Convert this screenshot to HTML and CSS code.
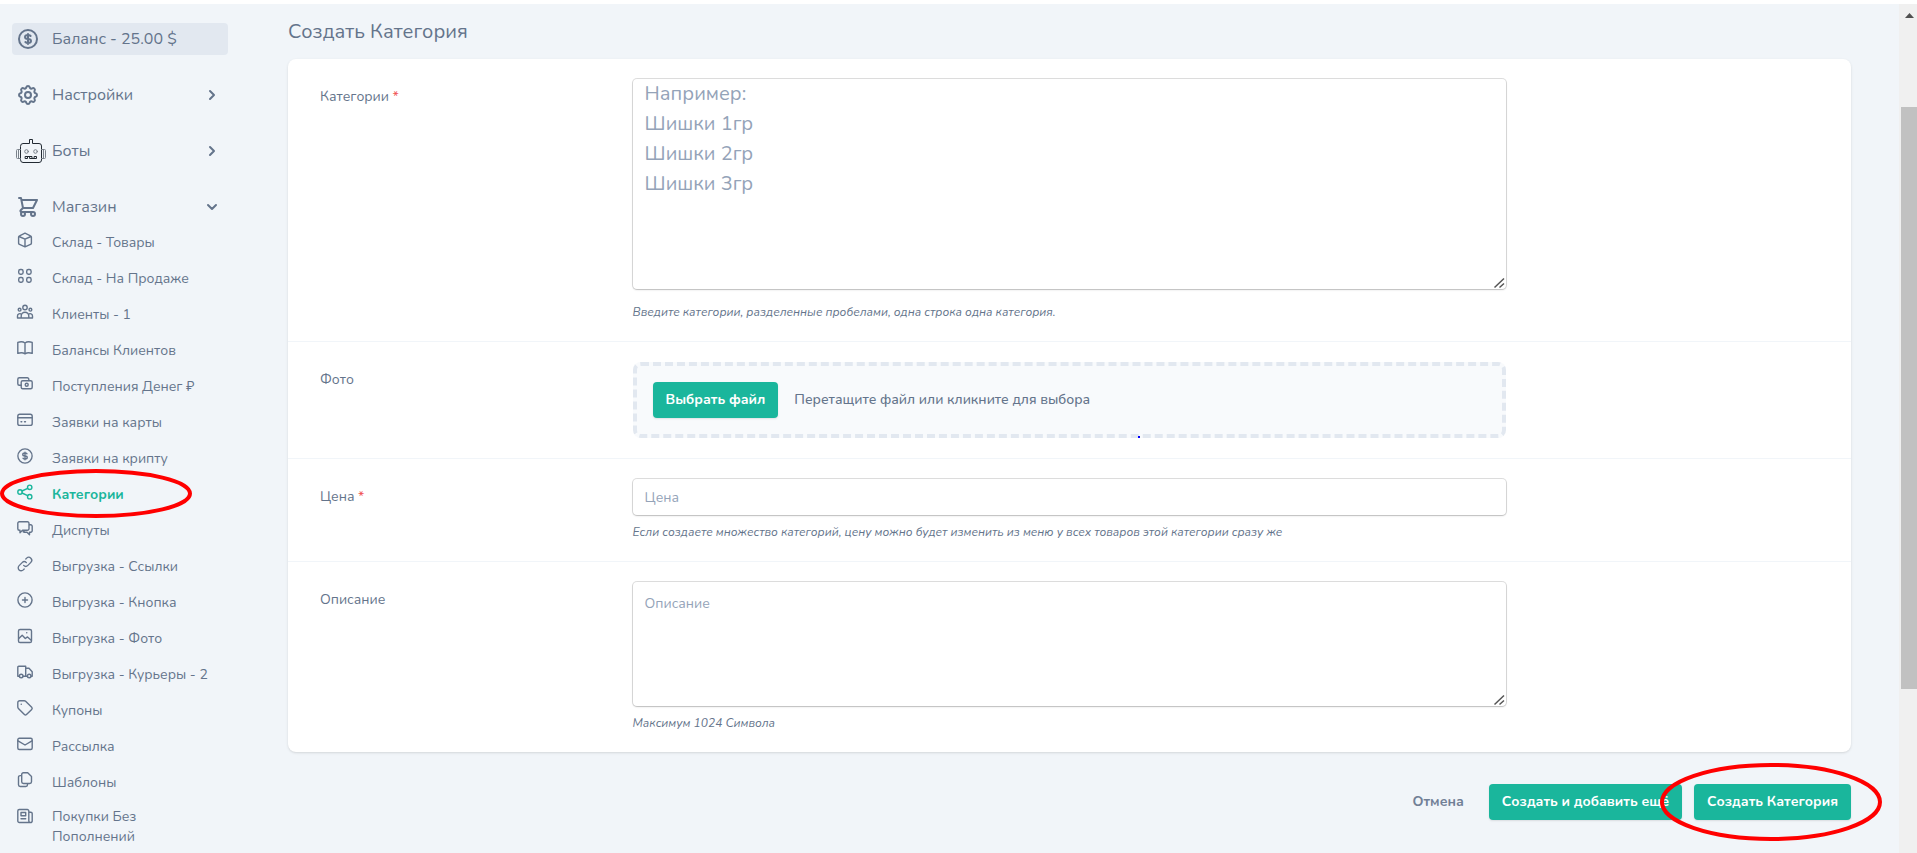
FILE: index.html
```html
<!DOCTYPE html>
<html lang="ru">
<head>
<meta charset="utf-8">
<meta name="viewport" content="width=device-width, initial-scale=1">
<title>Создать Категория</title>
<link rel="stylesheet" href="styles.css">
</head>
<body>
<div class="app">
  <nav class="sidebar" aria-label="Меню">
    <ul class="menu">
      <li><a class="menu-link is-balance" href="#">
        <span class="menu-icon"><svg class="icon" viewBox="0 0 24 24"><path d="M12 8c-1.657 0-3 .895-3 2s1.343 2 3 2 3 .895 3 2-1.343 2-3 2m0-8c1.11 0 2.080.402 2.599 1M12 8V7m0 1v8m0 0v1m0-1c-1.11 0-2.080-.402-2.599-1M21 12a9 9 0 11-18 0 9 9 0 0118 0z"/></svg></span>
        <span>Баланс - 25.00 $</span></a></li>
      <li><button class="menu-link" type="button">
        <span class="menu-icon"><svg class="icon" viewBox="0 0 24 24"><path d="M10.325 4.317c.426-1.756 2.924-1.756 3.350 0a1.724 1.724 0 002.573 1.066c1.543-.94 3.310.826 2.370 2.370a1.724 1.724 0 001.065 2.572c1.756.426 1.756 2.924 0 3.350a1.724 1.724 0 00-1.066 2.573c.94 1.543-.826 3.310-2.370 2.370a1.724 1.724 0 00-2.572 1.065c-.426 1.756-2.924 1.756-3.350 0a1.724 1.724 0 00-2.573-1.066c-1.543.94-3.310-.826-2.370-2.370a1.724 1.724 0 00-1.065-2.572c-1.756-.426-1.756-2.924 0-3.350a1.724 1.724 0 001.066-2.573c-.94-1.543.826-3.310 2.370-2.370.996.608 2.296.07 2.572-1.065z"/><path d="M15 12a3 3 0 11-6 0 3 3 0 016 0z"/></svg></span>
        <span>Настройки</span>
        <svg class="chevron" viewBox="0 0 12 12"><path d="M4 2l4 4-4 4"/></svg></button></li>
      <li><button class="menu-link" type="button">
        <span class="menu-icon"><svg class="robot" viewBox="0 0 30 24"><path d="M4.500 7a2.500 2.500 0 012.500-2.500h6.500v-4h3v4H23A2.500 2.500 0 0125.500 7v14a2.500 2.500 0 01-2.500 2.500H7A2.500 2.500 0 014.500 21z"/><path class="faint" d="M4.500 10.500h-3a1 1 0 00-1 1v7a1 1 0 001 1h3M2.500 11v8M25.500 10.500h3a1 1 0 011 1v7a1 1 0 01-1 1h-3M27.500 11v8"/><circle class="faint" cx="10.500" cy="12.500" r="1.800"/><circle class="faint" cx="19.500" cy="12.500" r="1.800"/><path d="M9.500 17.500h2v2h-2zM14 17.500h2v2h-2zM18.500 17.500h2v2h-2zM11.500 17.500H14M16 19.500h2.500"/></svg></span>
        <span>Боты</span>
        <svg class="chevron" viewBox="0 0 12 12"><path d="M4 2l4 4-4 4"/></svg></button></li>
      <li><button class="menu-link" type="button" aria-expanded="true">
        <span class="menu-icon"><svg class="icon" viewBox="0 0 24 24"><path d="M3 3h2l.4 2M7 13h10l4-8H5.400M7 13L5.400 5M7 13l-2.293 2.293c-.63.63-.184 1.707.707 1.707H17m0 0a2 2 0 100 4 2 2 0 000-4zm-8 2a2 2 0 11-4 0 2 2 0 014 0z"/></svg></span>
        <span>Магазин</span>
        <svg class="chevron" viewBox="0 0 12 12"><path d="M2 4l4 4 4-4"/></svg></button>
        <ul class="submenu">
          <li><a class="sub-link" href="#"><svg class="sub-icon" viewBox="0 0 18 18"><path d="M9 2.200L14.500 4.800a1.500 1.500 0 01.9 1.300v6a1.500 1.500 0 01-.9 1.300L9 15.800l-5.500-2.400a1.500 1.500 0 01-.9-1.300v-6a1.500 1.500 0 01.9-1.300zM3 5.500l6 2.700 6-2.700M9 8.200v7.400"/></svg><span>Склад - Товары</span></a></li>
          <li><a class="sub-link" href="#"><svg class="sub-icon" viewBox="0 0 18 18"><rect x="2.700" y="2.500" width="4.400" height="4.800" rx="1.700"/><rect x="10.700" y="2.500" width="4.400" height="4.800" rx="1.700"/><rect x="2.700" y="10.500" width="4.400" height="4.800" rx="1.700"/><rect x="10.700" y="10.500" width="4.400" height="4.800" rx="1.700"/></svg><span>Склад - На Продаже</span></a></li>
          <li><a class="sub-link" href="#"><svg class="sub-icon" viewBox="0 0 18 18"><circle cx="9" cy="4.500" r="2.200"/><circle cx="3.600" cy="6.700" r="1.400"/><circle cx="14.400" cy="6.700" r="1.400"/><path d="M5.200 15v-2a3.800 3.800 0 017.600 0v2zM5.200 15H1.500v-2a2.300 2.300 0 014-1.600M12.800 15h3.700v-2a2.300 2.300 0 00-4-1.600"/></svg><span>Клиенты - 1</span></a></li>
          <li><a class="sub-link" href="#"><svg class="sub-icon" viewBox="0 0 18 18"><path d="M9 4C7.500 2.800 4 2.600 1.800 3.400v11C4 13.600 7.500 13.800 9 14.800M9 4c1.500-1.200 5-1.400 7.200-.6v11c-2.200-.8-5.700-.6-7.200.4M9 4v10.800"/></svg><span>Балансы Клиентов</span></a></li>
          <li><a class="sub-link" href="#"><svg class="sub-icon" viewBox="0 0 18 18"><path d="M12.800 5.500V4.300a1.500 1.500 0 00-1.500-1.500h-8a1.500 1.500 0 00-1.500 1.500v4.500a1.500 1.500 0 001.500 1.500h2"/><rect x="5.200" y="5.700" width="11" height="8" rx="1.500"/><circle cx="10.700" cy="9.700" r="1.500"/></svg><span>Поступления Денег ₽</span></a></li>
          <li><a class="sub-link" href="#"><svg class="sub-icon" viewBox="0 0 18 18"><rect x="1.800" y="3.200" width="14.400" height="11.200" rx="2"/><path d="M2 6.800h14M5 10.700h.8M8.500 10.700h1"/></svg><span>Заявки на карты</span></a></li>
          <li><a class="sub-link" href="#"><svg class="sub-icon" viewBox="0 0 24 24"><path class="wide" d="M12 8c-1.657 0-3 .895-3 2s1.343 2 3 2 3 .895 3 2-1.343 2-3 2m0-8c1.110 0 2.080.402 2.599 1M12 8V7m0 1v8m0 0v1m0-1c-1.110 0-2.080-.402-2.599-1M21.500 12a9.500 9.500 0 11-19 0 9.500 9.500 0 0119 0z"/></svg><span>Заявки на крипту</span></a></li>
          <li class="marked"><a class="sub-link is-active" href="#" aria-current="page"><svg class="sub-icon" viewBox="0 0 18 18"><circle cx="4" cy="9" r="2.200"/><circle cx="13.700" cy="4.300" r="2.200"/><circle cx="13.700" cy="13.700" r="2.200"/><path d="M6 8l5.700-2.700M6 10l5.700 2.700"/></svg><span>Категории</span></a>
            <svg class="mark mark-menu" viewBox="0 0 192 49" aria-hidden="true"><ellipse cx="96" cy="24.500" rx="94" ry="22.500"/></svg></li>
          <li><a class="sub-link" href="#"><svg class="sub-icon" viewBox="0 0 18 18"><path d="M13 4.500v-.2a1.500 1.500 0 00-1.500-1.500H3.300a1.500 1.500 0 00-1.500 1.500v5.400a1.500 1.500 0 001.500 1.500H4v2.500l2.500-2.500h5A1.500 1.500 0 0013 9.700zM13 5.700h1.700a1.500 1.500 0 011.500 1.500v4.600a1.500 1.500 0 01-1.500 1.500H13.500v2.500L11 13.300H8.300a1.500 1.500 0 01-1.100-.5l1.600-1.600"/></svg><span>Диспуты</span></a></li>
          <li><a class="sub-link" href="#"><svg class="sub-icon" viewBox="0 0 24 24"><path class="wide" d="M13.828 10.172a4 4 0 00-5.656 0l-4 4a4 4 0 105.656 5.656l1.102-1.101m-.758-4.899a4 4 0 005.656 0l4-4a4 4 0 00-5.656-5.656l-1.100 1.100"/></svg><span>Выгрузка - Ссылки</span></a></li>
          <li><a class="sub-link" href="#"><svg class="sub-icon" viewBox="0 0 18 18"><circle cx="9" cy="9" r="7.100"/><path d="M9 6.500v5M6.500 9h5"/></svg><span>Выгрузка - Кнопка</span></a></li>
          <li><a class="sub-link" href="#"><svg class="sub-icon" viewBox="0 0 18 18"><rect x="2.500" y="2.500" width="13" height="13" rx="1.600"/><path d="M2.800 11.500l3.400-3.200 3.100 3.200 2.200-1.600 3.700 3.300M10.700 5.700h.1"/></svg><span>Выгрузка - Фото</span></a></li>
          <li><a class="sub-link" href="#"><svg class="sub-icon" viewBox="0 0 18 18"><path d="M3.300 13.200H1.800V4.300a1 1 0 011-1h6.900v9.900H7M9.700 5.300h3.300l3.200 3.500v4.400H15M9.700 13.200h1.700"/><circle cx="5.200" cy="13" r="1.800"/><circle cx="13.200" cy="13" r="1.800"/></svg><span>Выгрузка - Курьеры - 2</span></a></li>
          <li><a class="sub-link" href="#"><svg class="sub-icon" viewBox="0 0 18 18"><path d="M1.800 3.700a2 2 0 012-2h4.400a2 2 0 011.400.6l6.100 6a1.500 1.500 0 010 2.100l-5.200 5.100a1.500 1.500 0 01-2.100 0L2.400 9.400a2 2 0 01-.6-1.400zM5.200 5.200h.1"/></svg><span>Купоны</span></a></li>
          <li><a class="sub-link" href="#"><svg class="sub-icon" viewBox="0 0 18 18"><rect x="1.800" y="3.300" width="14.400" height="11.200" rx="1.500"/><path d="M2 5.800l7 4.200 7-4.200"/></svg><span>Рассылка</span></a></li>
          <li><a class="sub-link" href="#"><svg class="sub-icon" viewBox="0 0 18 18"><path d="M5.700 3.500A1.700 1.700 0 017.400 1.800h4.300l3.800 3.700v5.300a1.700 1.700 0 01-1.700 1.700H7.400a1.700 1.700 0 01-1.700-1.700zM5.500 4.600H4.200a1.700 1.700 0 00-1.700 1.700v7.500a1.700 1.700 0 001.700 1.700h5.600a1.700 1.700 0 001.700-1.700v-1.100"/></svg><span>Шаблоны</span></a></li>
          <li><a class="sub-link" href="#"><svg class="sub-icon" viewBox="0 0 18 18"><path d="M12.800 5.200h2a1.400 1.400 0 011.400 1.400V14a1.500 1.500 0 01-1.700 1.500M12.800 14V4a1.500 1.500 0 00-1.500-1.500h-8A1.500 1.500 0 001.800 4v10a1.500 1.500 0 001.500 1.500h11.200A1.600 1.600 0 0112.800 14zM5 5.500h4.700v3.300H5zM5 11.700h4.700"/></svg><span>Покупки Без Пополнений</span></a></li>
        </ul></li>
    </ul>
  </nav>

  <main class="content">
    <h1 class="title">Создать Категория</h1>
    <form>
      <div class="card">
        <div class="row">
          <label class="label" for="names">Категории <span class="required">*</span></label>
          <div class="field">
            <textarea class="control area-names" id="names" placeholder="Например:&#10;Шишки 1гр&#10;Шишки 2гр&#10;Шишки 3гр"></textarea>
            <p class="help">Введите категории, разделенные пробелами, одна строка одна категория.</p>
          </div>
        </div>
        <div class="row">
          <span class="label" id="photo-label">Фото</span>
          <div class="field">
            <div class="dropzone" role="group" aria-labelledby="photo-label">
              <button class="btn" type="button">Выбрать файл</button>
              <span class="drop-text">Перетащите файл или кликните для выбора</span>
              <span class="dot"></span>
            </div>
          </div>
        </div>
        <div class="row">
          <label class="label" for="price">Цена <span class="required">*</span></label>
          <div class="field">
            <input class="control" id="price" type="text" placeholder="Цена">
            <p class="help">Если создаете множество категорий, цену можно будет изменить из меню у всех товаров этой категории сразу же</p>
          </div>
        </div>
        <div class="row">
          <label class="label" for="about">Описание</label>
          <div class="field">
            <textarea class="control area-about" id="about" placeholder="Описание"></textarea>
            <p class="help">Максимум 1024 Символа</p>
          </div>
        </div>
      </div>
      <div class="actions">
        <button class="cancel" type="button">Отмена</button>
        <button class="btn" type="button">Создать и добавить ещё</button>
        <div class="marked">
          <button class="btn" type="submit">Создать Категория</button>
          <svg class="mark mark-submit" viewBox="0 0 222 78" aria-hidden="true"><ellipse cx="111" cy="39" rx="109" ry="37"/></svg>
        </div>
      </div>
    </form>
  </main>

  <div class="scrollbar" aria-hidden="true">
    <svg class="scroll-arrow" viewBox="0 0 9 5"><path d="M0 5L4.500 0 9 5z"/></svg>
    <div class="thumb"></div>
  </div>
</div>
</body>
</html>
```
FILE: styles.css
```css
* {
  box-sizing: border-box;
}

body {
  margin: 0;
  height: 100vh;
  overflow: hidden;
  background: #fff;
  color: #64748b;
  font: 14px/20px Nunito, "Noto Sans", sans-serif;
}

ul {
  margin: 0;
  padding: 0;
  list-style: none;
}

button,
input,
textarea {
  font: inherit;
  color: inherit;
  border: 0;
}

button {
  background: none;
  cursor: pointer;
}

a {
  color: inherit;
  text-decoration: none;
}

.app {
  display: flex;
  height: 100vh;
  border-top: 4px solid #fff;
  background: #f1f5f9;
}

/* Sidebar */
.sidebar {
  flex: 0 0 240px;
  padding: 19px 12px 0;
}

.menu {
  display: flex;
  flex-direction: column;
  gap: 24px;
}

.menu-link {
  display: flex;
  align-items: center;
  width: 100%;
  height: 32px;
  padding: 0 10px 0 4px;
  border-radius: 4px;
  font-size: 16px;
  line-height: 24px;
}

.menu-link.is-balance {
  background: #e2e8f0;
}

.menu-icon {
  display: flex;
  flex: 0 0 36px;
}

svg {
  display: block;
  fill: none;
  stroke: currentColor;
  stroke-linecap: round;
  stroke-linejoin: round;
}

.icon {
  width: 24px;
  height: 24px;
  stroke-width: 2;
}

.robot {
  width: 30px;
  height: 24px;
  flex: none;
  color: #222a33;
  stroke-width: 1;
}

.faint {
  stroke: #7a828b;
}

.chevron {
  width: 12px;
  height: 12px;
  margin-left: auto;
  stroke-width: 2;
}

.submenu {
  padding-top: 2px;
}

.sub-link {
  display: flex;
  align-items: center;
  min-height: 36px;
  padding: 6px 60px 6px 4px;
}

.sub-link span {
  margin-right: -48px;
}

.submenu li:last-child span {
  margin-right: 0;
}

.sub-link.is-active {
  color: #1ab69c;
  font-weight: 700;
}

.sub-icon {
  flex: 0 0 18px;
  align-self: flex-start;
  width: 18px;
  height: 18px;
  margin-right: 18px;
  stroke-width: 1.4;
}

.sub-icon .wide {
  stroke-width: 1.8;
}

/* Hand-drawn marks */
.marked {
  position: relative;
}

.mark {
  position: absolute;
  z-index: 1;
  stroke: #f00;
  stroke-width: 4;
  pointer-events: none;
}

.mark-menu {
  left: -12px;
  top: -8px;
  width: 192px;
  height: 49px;
}

.mark-submit {
  left: -34px;
  top: -21px;
  width: 222px;
  height: 78px;
}

/* Form */
.content {
  flex: 1;
  min-width: 0;
  padding: 16px 48px 0;
}

.title {
  margin: 0 0 15px;
  font-size: 20px;
  font-weight: 400;
  line-height: 24px;
}

.card {
  border-radius: 8px;
  background: #fff;
  box-shadow: 0 1px 3px rgba(0, 0, 0, .1), 0 1px 2px -1px rgba(0, 0, 0, .1);
}

.row {
  display: flex;
  border-bottom: 1px solid #f1f5f9;
}

.row:last-child {
  border-bottom: 0;
}

.label {
  width: 20%;
  padding: 28px 32px 0;
}

.required {
  color: #f05252;
}

.field {
  width: 60%;
  padding: 20px 32px;
}

.control {
  display: block;
  width: 100%;
  height: 36px;
  margin: 0;
  padding: 0 12px;
  border-radius: 4px;
  outline: 0;
  background: #fff;
  box-shadow: 0 0 0 1px rgba(0, 0, 0, .13), 0 1px 2px rgba(0, 0, 0, .15);
}

.control::placeholder {
  color: #94a3b8;
  opacity: 1;
}

.control::-webkit-resizer {
  background: url("data:image/svg+xml,%3Csvg xmlns='http://www.w3.org/2000/svg' width='15' height='15'%3E%3Cpath d='M3.500 13.500L13 4.500M8.500 13.500L13 9.500' stroke='%23555' stroke-width='1.500'/%3E%3C/svg%3E") right bottom no-repeat;
}

.area-names {
  height: 210px;
  margin-bottom: 14px;
  font-size: 20px;
  line-height: 30px;
}

.area-about {
  height: 124px;
  padding-top: 12px;
}

.help {
  margin: 8px 0 0;
  font-size: 12px;
  font-style: italic;
  line-height: 18px;
}

.area-names + .help {
  margin-top: 0;
}

.dropzone {
  position: relative;
  display: flex;
  align-items: center;
  gap: 16px;
  padding: 16px;
  border: 4px dashed #e2e8f0;
  border-radius: 8px;
  background: #f8fafc;
}

.drop-text {
  font-weight: 500;
}

.dot {
  position: absolute;
  left: 501px;
  bottom: -4px;
  width: 2px;
  height: 2px;
  background: #00f;
}

.btn {
  height: 36px;
  padding: 0 13px;
  border-radius: 4px;
  background: #1ab69c;
  color: #fff;
  font-weight: 700;
  box-shadow: 0 1px 2px rgba(0, 0, 0, .1);
}

.actions {
  display: flex;
  justify-content: flex-end;
  gap: 12px;
  margin-top: 32px;
}

.cancel {
  padding: 0 13px;
  color: #718096;
  font-weight: 700;
}

/* Scrollbar */
.scrollbar {
  display: flex;
  flex-direction: column;
  align-items: flex-end;
  flex: 0 0 18px;
  background: #f0f0f0;
}

.scroll-arrow {
  flex: none;
  width: 9px;
  height: 5px;
  margin: 9px 3px 0 0;
  fill: #505050;
  stroke: none;
}

.thumb {
  width: 16px;
  height: 68.5%;
  margin-top: 89px;
  background: #c1c1c1;
}
```
